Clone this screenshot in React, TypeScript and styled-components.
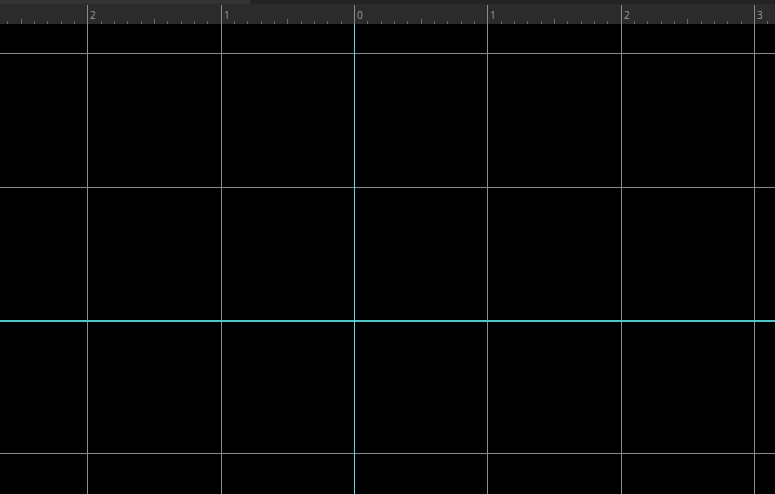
import React from 'react'
import styled, { createGlobalStyle } from 'styled-components'

const GlobalStyle = createGlobalStyle`
  html, body {
    margin: 0;
    padding: 0;
    background: #000;
    overflow: hidden;
  }
  #root {
    width: 775px;
    height: 494px;
  }
`

const WIDTH = 775
const ORIGIN_X = 354
const ORIGIN_Y = 296 // relative to canvas top (canvas starts at y=24)
const STEP = 400 / 3
const AXIS = '#5fd8df'
const LINE = '#8c8c8c'

const Screen = styled.div`
  width: 775px;
  height: 494px;
  display: flex;
  flex-direction: column;
  background: #000;
  font-family: 'Open Sans', 'DejaVu Sans', sans-serif;
`

const TabStrip = styled.div`
  height: 4px;
  display: flex;
  background: #232323;
  flex-shrink: 0;
`

const Tab = styled.div<{ $width: number }>`
  width: ${({ $width }) => $width}px;
  height: 100%;
  background: #333333;
`

const Ruler = styled.div`
  height: 20px;
  flex-shrink: 0;
  background: #2b2b2b;
`

const Canvas = styled.div`
  flex: 1;
  background: #000;
`

function majorPositions(origin: number, max: number) {
  const list: { pos: number; label: number }[] = []
  for (let i = -5; i <= 5; i++) {
    const p = origin + i * STEP
    if (p >= -1 && p <= max + 1) list.push({ pos: Math.round(p), label: Math.abs(i) })
  }
  return list
}

function HorizontalRuler() {
  const majors = majorPositions(ORIGIN_X, WIDTH)
  const minors: { pos: number; mid: boolean }[] = []
  for (let i = -50; i <= 50; i++) {
    if (i % 10 === 0) continue
    const p = ORIGIN_X + (i * STEP) / 10
    if (p < 0 || p > WIDTH) continue
    minors.push({ pos: Math.round(p) + 0.5, mid: Math.abs(i) % 10 === 5 })
  }
  return (
    <svg width={WIDTH} height={20} style={{ display: 'block' }}>
      {minors.map((m, i) => (
        <line key={i} x1={m.pos} x2={m.pos} y1={m.mid ? 15 : 17} y2={20} stroke="#6a6a6a" strokeWidth={1} />
      ))}
      {majors.map((m) => (
        <g key={m.pos}>
          <line x1={m.pos + 0.5} x2={m.pos + 0.5} y1={1} y2={20} stroke={LINE} strokeWidth={1} />
          <text x={m.pos + 3} y={14.5} fill="#9a9a9a" fontSize={10} fontFamily="'Open Sans', 'DejaVu Sans', sans-serif">
            {m.label}
          </text>
        </g>
      ))}
    </svg>
  )
}

function Grid() {
  const height = 470
  const cols = majorPositions(ORIGIN_X, WIDTH)
  const rows = majorPositions(ORIGIN_Y, height)
  return (
    <svg width={WIDTH} height={height} style={{ display: 'block' }}>
      {cols.map((c) => (
        <line
          key={'c' + c.pos}
          x1={c.pos + 0.5}
          x2={c.pos + 0.5}
          y1={0}
          y2={height}
          stroke={c.label === 0 ? AXIS : LINE}
          strokeWidth={1}
        />
      ))}
      {rows
        .filter((r) => r.label !== 0)
        .map((r) => (
          <line key={'r' + r.pos} x1={0} x2={WIDTH} y1={r.pos + 0.5} y2={r.pos + 0.5} stroke={LINE} strokeWidth={1} />
        ))}
      <line x1={0} x2={WIDTH} y1={ORIGIN_Y + 1} y2={ORIGIN_Y + 1} stroke="#4fc6cc" strokeWidth={2} />
      <line x1={ORIGIN_X + 0.5} x2={ORIGIN_X + 0.5} y1={0} y2={height} stroke={AXIS} strokeWidth={1} />
    </svg>
  )
}

export default function App() {
  return (
    <Screen>
      <GlobalStyle />
      <TabStrip>
        <Tab $width={250} />
      </TabStrip>
      <Ruler>
        <HorizontalRuler />
      </Ruler>
      <Canvas>
        <Grid />
      </Canvas>
    </Screen>
  )
}
